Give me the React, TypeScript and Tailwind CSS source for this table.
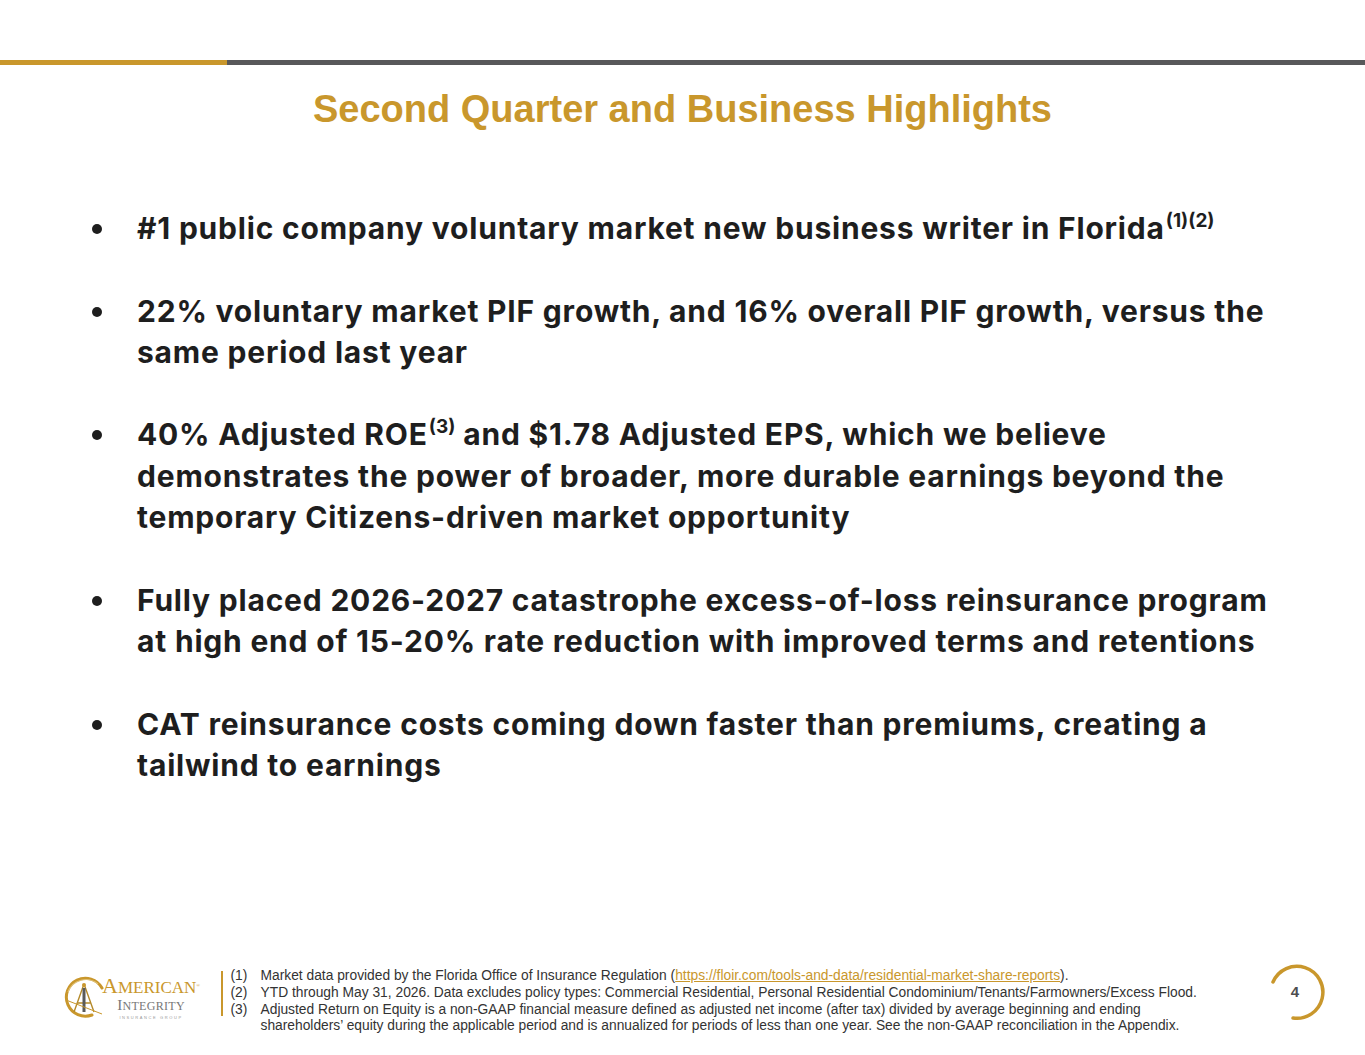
import { ReactNode } from 'react';

const Sup = ({ children }: { children: ReactNode }) => (
  <span className="align-[12px] ml-[1px] text-[19px] leading-none font-bold tracking-normal">{children}</span>
);

const bullets: ReactNode[] = [
  <>#1 public company voluntary market new business writer in Florida<Sup>(1)(2)</Sup></>,
  <>22% voluntary market PIF growth, and 16% overall PIF growth, versus the same period last year</>,
  <>40% Adjusted ROE<Sup>(3)</Sup> and $1.78 Adjusted EPS, which we believe demonstrates the power of broader, more durable earnings beyond the temporary Citizens-driven market opportunity</>,
  <>Fully placed 2026-2027 catastrophe excess-of-loss reinsurance program at high end of 15-20% rate reduction with improved terms and retentions</>,
  <>CAT reinsurance costs coming down faster than premiums, creating a tailwind to earnings</>,
];

const footnotes = [
  {
    n: '(1)',
    text: (
      <>
        Market data provided by the Florida Office of Insurance Regulation (
        <span className="text-[#c9972c] underline">https://floir.com/tools-and-data/residential-market-share-reports</span>).
      </>
    ),
  },
  {
    n: '(2)',
    text: <>YTD through May 31, 2026. Data excludes policy types: Commercial Residential, Personal Residential Condominium/Tenants/Farmowners/Excess Flood.</>,
  },
  {
    n: '(3)',
    text: (
      <>
        Adjusted Return on Equity is a non-GAAP financial measure defined as adjusted net income (after tax) divided by average beginning and ending
        shareholders’ equity during the applicable period and is annualized for periods of less than one year. See the non-GAAP reconciliation in the Appendix.
      </>
    ),
  },
];

function Logo() {
  return (
    <div className="flex items-center w-[150px]">
      <svg width="44" height="44" viewBox="0 0 44 44" className="shrink-0">
        {/* gold swoosh ring */}
        <path d="M40 12 A19 19 0 1 0 30 39" fill="none" stroke="#c9972c" strokeWidth="3" strokeLinecap="round" />
        <path d="M6 16 A19 19 0 0 1 36 8" fill="none" stroke="#e0c27a" strokeWidth="1.2" />
        {/* compass A */}
        <path d="M22 8 L12 36 M22 8 L32 36 M15 27 L29 27" fill="none" stroke="#b58a2a" strokeWidth="1.4" />
        <rect x="20.5" y="12" width="3" height="24" fill="#5a5a5a" />
        <circle cx="22" cy="9" r="2" fill="#c9972c" />
        <path d="M4 24 L40 38" stroke="#c9972c" strokeWidth="1" />
      </svg>
      <div className="-ml-[4px] flex flex-col items-center">
        <span className="text-[22px] leading-[20px] text-[#c9972c]" style={{ fontFamily: '"Liberation Serif", serif' }}>
          A<span className="text-[17px]">MERICAN</span>
          <span className="text-[5px] align-top">®</span>
        </span>
        <span className="text-[15px] leading-[14px] text-[#777777] tracking-[0.02em]" style={{ fontFamily: '"Liberation Serif", serif' }}>
          I<span className="text-[12px]">NTEGRITY</span>
        </span>
        <span className="text-[4px] leading-[5px] text-[#999999] tracking-[0.4em] mt-[2px]" style={{ fontFamily: '"Liberation Sans", sans-serif' }}>
          INSURANCE GROUP
        </span>
      </div>
    </div>
  );
}

function PageNumber({ n }: { n: number }) {
  return (
    <div className="relative w-[64px] h-[64px] flex items-center justify-center">
      <svg width="64" height="64" viewBox="0 0 64 64" className="absolute inset-0">
        <path d="M10 22 A26 26 0 1 1 30 58" fill="none" stroke="#c9972c" strokeWidth="3.5" strokeLinecap="round" />
      </svg>
      <span className="relative text-[15px] font-bold text-[#4d4d4f]">{n}</span>
    </div>
  );
}

export default function App() {
  return (
    <div className="w-full h-[1055px] bg-white flex flex-col" style={{ fontFamily: '"Liberation Sans", Arial, sans-serif' }}>
      {/* top rule */}
      <div className="mt-[60px] flex h-[5px]">
        <div className="w-[227px] bg-[#c9972c]" />
        <div className="flex-1 bg-[#58585a]" />
      </div>

      <h1 className="mt-[22px] text-center text-[38px] leading-[44px] font-bold text-[#c9972c]">
        Second Quarter and Business Highlights
      </h1>

      <ul className="mt-[77px] pl-[92px] pr-[90px] flex flex-col gap-[41.3px]" style={{ fontFamily: 'Inter, sans-serif' }}>
        {bullets.map((b, i) => (
          <li key={i} className="flex text-[30px] leading-[41.3px] tracking-[0.8px] font-bold text-[#1e1e1e]">
            <span className="w-[45px] shrink-0 flex items-start pt-[16px]">
              <span className="w-[10px] h-[10px] rounded-full bg-[#1e1e1e]" />
            </span>
            <span>{b}</span>
          </li>
        ))}
      </ul>

      <footer className="mt-auto mb-[20px] flex items-start pl-[62px] pr-[38px]">
        <div className="pt-[8px]">
          <Logo />
        </div>
        <div className="ml-[9px] mt-[3px] w-[1.5px] h-[45px] bg-[#c9972c]" />
        <div className="ml-[8px] w-[990px] flex flex-col text-[13.8px] leading-[16.7px] text-[#333333]">
          {footnotes.map(f => (
            <div key={f.n} className="flex">
              <span className="w-[30px] shrink-0">{f.n}</span>
              <span>{f.text}</span>
            </div>
          ))}
        </div>
        <div className="ml-auto -mt-[8px]">
          <PageNumber n={4} />
        </div>
      </footer>
    </div>
  );
}
